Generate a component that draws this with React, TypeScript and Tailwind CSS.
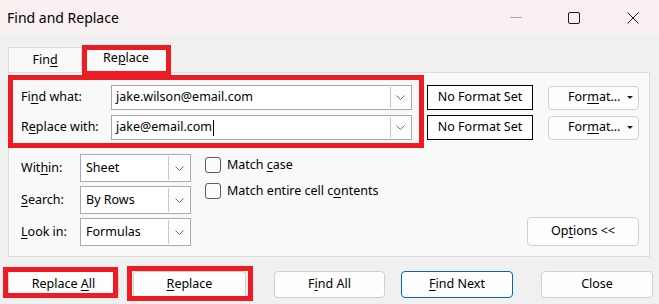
import React from 'react';

const U = ({ children }: { children: React.ReactNode }) => (
    <span className="underline decoration-1 underline-offset-[2px]">{children}</span>
);

const Chevron = () => (
    <svg width="9" height="5" viewBox="0 0 9 5">
        <polyline points="0.5,0.5 4.5,4.5 8.5,0.5" fill="none" stroke="#707070" strokeWidth="1" />
    </svg>
);

const Combo = ({ value, caret }: { value: string; caret?: boolean }) => (
    <div className="flex h-[25px] w-[301px] border border-[#a8a8a8] bg-white">
        <div className="flex flex-1 items-center pl-[4px]">
            <span>{value}</span>
            {caret && <span className="ml-px h-[16px] w-px bg-black" />}
        </div>
        <div className="my-px mr-px flex w-[20px] items-center justify-center border-l border-[#c8c8c8] bg-[#fcfcfc]">
            <Chevron />
        </div>
    </div>
);

const Select = ({ value }: { value: string }) => (
    <div className="flex h-[28px] w-[111px] border border-[#a8a8a8] bg-white">
        <div className="flex flex-1 items-center pl-[5px]">{value}</div>
        <div className="my-px mr-px flex w-[21px] items-center justify-center border-l border-[#c8c8c8] bg-[#fcfcfc]">
            <Chevron />
        </div>
    </div>
);

const NoFormat = () => (
    <div className="flex h-[25px] w-[106px] items-center justify-center border border-black bg-white">
        No Format Set
    </div>
);

const FormatButton = () => (
    <div className="flex h-[24px] w-[91px] items-center rounded-[4px] border border-[#d0d0d0] bg-[#fdfdfd] pl-[19px] pr-[5px]">
        <span>
            For<U>m</U>at…
        </span>
        <svg className="ml-auto" width="6" height="3" viewBox="0 0 6 3">
            <polygon points="0,0 6,0 3,3" fill="#1a1a1a" />
        </svg>
    </div>
);

const Check = ({ children }: { children: React.ReactNode }) => (
    <div className="flex items-center gap-[6px]">
        <div className="h-[16px] w-[16px] rounded-[3px] border border-[#5a5a5a] bg-[#fbfbfb]" />
        <span>{children}</span>
    </div>
);

const Btn = ({ children, className = '' }: { children: React.ReactNode; className?: string }) => (
    <div
        className={
            'flex h-[27px] items-center justify-center rounded-[4px] border bg-[#fdfdfd] ' +
            className
        }
    >
        {children}
    </div>
);

const App = () => {
    return (
        <div
            className="relative h-[304px] w-[659px] overflow-hidden bg-[#f0f0f0] text-[12.5px] text-black"
            style={{ fontFamily: '"Noto Sans", "Open Sans", sans-serif' }}
        >
            {/* title bar */}
            <div className="flex h-[35px] items-center bg-[#f9f0f1] pl-[7px]">
                <span className="text-[14px]">Find and Replace</span>
                <div className="ml-auto flex items-center">
                    <div className="h-px w-[12px] bg-[#a8a8a8]" />
                    <div className="ml-[46px] h-[12px] w-[12px] rounded-[2px] border border-[#1a1a1a]" />
                    <svg className="ml-[47px] mr-[20px]" width="12" height="12" viewBox="0 0 12 12">
                        <path d="M0.5 0.5 L11.5 11.5 M11.5 0.5 L0.5 11.5" stroke="#1a1a1a" strokeWidth="1" />
                    </svg>
                </div>
            </div>

            {/* tabs */}
            <div className="ml-[8px] mt-[10px] flex items-end">
                <div className="flex h-[25px] w-[74px] items-center justify-center border border-b-0 border-[#dcdcdc] bg-[#f9f9f9] pt-px">
                    <span>
                        Fin<U>d</U>
                    </span>
                </div>
                <div className="relative z-10 -mb-px flex h-[28px] w-[88px] items-center justify-center border border-b-0 border-[#dcdcdc] bg-[#f9f9f9] pb-[2px]">
                    <span>
                        Re<U>p</U>lace
                    </span>
                </div>
            </div>

            {/* panel */}
            <div className="ml-[8px] h-[185px] w-[642px] border border-[#dcdcdc] bg-[#f9f9f9] pl-[12px] pt-[12px]">
                <div className="flex flex-col gap-[5px]">
                    <div className="flex items-center">
                        <span className="w-[90px]">
                            Fi<U>n</U>d what:
                        </span>
                        <Combo value="jake.wilson@email.com" />
                        <div className="ml-[15px]">
                            <NoFormat />
                        </div>
                        <div className="ml-[15px]">
                            <FormatButton />
                        </div>
                    </div>
                    <div className="flex items-center">
                        <span className="w-[90px]">
                            R<U>e</U>place with:
                        </span>
                        <Combo value="jake@email.com" caret />
                        <div className="ml-[15px]">
                            <NoFormat />
                        </div>
                        <div className="ml-[15px]">
                            <FormatButton />
                        </div>
                    </div>
                </div>

                <div className="mt-[14px] flex">
                    <div className="flex flex-col gap-[4px]">
                        <div className="flex items-center">
                            <span className="w-[59px]">
                                Wit<U>h</U>in:
                            </span>
                            <Select value="Sheet" />
                        </div>
                        <div className="flex items-center">
                            <span className="w-[59px]">
                                <U>S</U>earch:
                            </span>
                            <Select value="By Rows" />
                        </div>
                        <div className="flex items-center">
                            <span className="w-[59px]">
                                <U>L</U>ook in:
                            </span>
                            <Select value="Formulas" />
                        </div>
                    </div>
                    <div className="ml-[14px] mt-[2px] flex flex-col gap-[7px]">
                        <Check>
                            Match <U>c</U>ase
                        </Check>
                        <Check>
                            Match entire cell c<U>o</U>ntents
                        </Check>
                    </div>
                    <div className="ml-auto mr-[10px] flex items-end">
                        <Btn className="h-[29px] w-[112px] border-[#d0d0d0]">
                            <span>
                                Op<U>t</U>ions &lt;&lt;
                            </span>
                        </Btn>
                    </div>
                </div>
            </div>

            {/* bottom buttons */}
            <div className="mt-[14px] flex">
                <Btn className="ml-[8px] w-[111px] border-[#d0d0d0]">
                    <span>
                        Replace <U>A</U>ll
                    </span>
                </Btn>
                <Btn className="ml-[14px] w-[113px] border-[#d0d0d0]">
                    <span>
                        <U>R</U>eplace
                    </span>
                </Btn>
                <Btn className="ml-[28px] w-[111px] border-[#d0d0d0]">
                    <span>
                        F<U>i</U>nd All
                    </span>
                </Btn>
                <Btn className="ml-[16px] w-[112px] border-[#0067c0]">
                    <span>
                        <U>F</U>ind Next
                    </span>
                </Btn>
                <Btn className="ml-[28px] w-[112px] border-[#d0d0d0]">
                    <span>Close</span>
                </Btn>
            </div>

            {/* red annotation boxes drawn over the dialog */}
            <div className="pointer-events-none absolute left-[82px] top-[45px] z-20 h-[31px] w-[89px] border-[5px] border-[#ed1c24]" />
            <div className="pointer-events-none absolute left-[8px] top-[75px] z-20 h-[73px] w-[416px] border-[5px] border-[#ed1c24]" />
            <div className="pointer-events-none absolute left-[3px] top-[267px] z-20 h-[31px] w-[115px] border-[5px] border-[#ed1c24]" />
            <div className="pointer-events-none absolute left-[127px] top-[266px] z-20 h-[35px] w-[126px] border-[5px] border-[#ed1c24]" />
        </div>
    );
};

export default App;
